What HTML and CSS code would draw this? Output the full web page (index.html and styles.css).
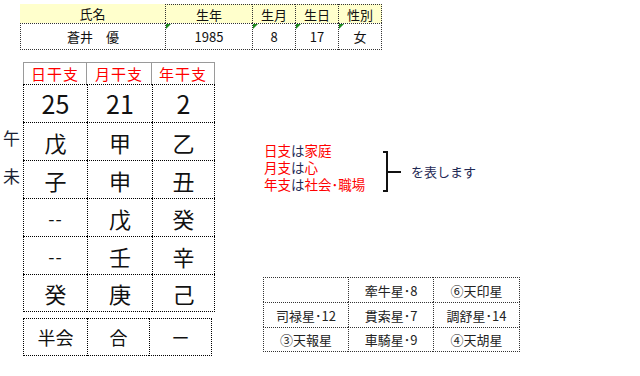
FILE: index.html
```html
<!DOCTYPE html>
<html lang="ja">
<head>
<meta charset="utf-8">
<title>命式</title>
<link rel="stylesheet" href="styles.css">
</head>
<body>
<div class="sheet">
  <div class="profile">
    <div class="ph ph-first">氏名</div>
    <div class="ph">生年</div>
    <div class="ph">生月</div>
    <div class="ph">生日</div>
    <div class="ph ph-last">性別</div>
    <div class="pd">蒼井　優</div>
    <div class="pd flag">1985</div>
    <div class="pd flag">8</div>
    <div class="pd flag">17</div>
    <div class="pd flag pd-last">女</div>
  </div>

  <div class="main">
    <div class="left">
      <div class="kanshi">
        <div class="lbl"></div>
        <div class="kh">日干支</div>
        <div class="kh">月干支</div>
        <div class="kh">年干支</div>

        <div class="lbl"></div>
        <div class="kc num">25</div>
        <div class="kc num">21</div>
        <div class="kc num kc-r">2</div>

        <div class="lbl">午</div>
        <div class="kc">戊</div>
        <div class="kc">甲</div>
        <div class="kc kc-r">乙</div>

        <div class="lbl">未</div>
        <div class="kc">子</div>
        <div class="kc">申</div>
        <div class="kc kc-r">丑</div>

        <div class="lbl"></div>
        <div class="kc dash">--</div>
        <div class="kc">戊</div>
        <div class="kc kc-r">癸</div>

        <div class="lbl"></div>
        <div class="kc dash">--</div>
        <div class="kc">壬</div>
        <div class="kc kc-r">辛</div>

        <div class="lbl"></div>
        <div class="kc kc-b">癸</div>
        <div class="kc kc-b">庚</div>
        <div class="kc kc-r kc-b">己</div>
      </div>

      <div class="relation">
        <div class="rc">半会</div>
        <div class="rc">合</div>
        <div class="rc rc-last">ー</div>
      </div>
    </div>

    <div class="right">
      <div class="note">
        <div class="note-lines">
          <div class="nl"><span class="red">日支</span>は<span class="red">家庭</span></div>
          <div class="nl"><span class="red">月支</span>は<span class="red">心</span></div>
          <div class="nl"><span class="red">年支</span>は<span class="red">社会･職場</span></div>
        </div>
        <svg class="bracket" width="20" height="51" viewBox="0 0 20 51">
          <path d="M1 10 H5 V49 H1 M5 30 H19" fill="none" stroke="#111" stroke-width="2"/>
        </svg>
        <div class="note-tail">を表します</div>
      </div>

      <div class="stars">
        <div class="sc"></div>
        <div class="sc">牽牛星･8</div>
        <div class="sc sc-r">⑥天印星</div>
        <div class="sc">司禄星･12</div>
        <div class="sc">貫索星･7</div>
        <div class="sc sc-r">調舒星･14</div>
        <div class="sc sc-b">③天報星</div>
        <div class="sc sc-b">車騎星･9</div>
        <div class="sc sc-r sc-b">④天胡星</div>
      </div>
    </div>
  </div>
</div>
</body>
</html>
```

FILE: styles.css
```css
* { box-sizing: border-box; }

body {
  margin: 0;
  background: #fff;
  color: #111;
  font-family: "Noto Sans CJK JP", "Noto Sans", sans-serif;
}

.sheet {
  width: 640px;
  height: 376px;
  padding-top: 4px;
}

/* ---------- profile table ---------- */
.profile {
  display: grid;
  grid-template-columns: 145px 87px 43px 43px 44px;
  grid-template-rows: 19px 27px;
  margin-left: 20px;
  width: max-content;
  font-size: 13px;
}

.ph {
  background: #ffffcc;
  display: flex;
  align-items: center;
  justify-content: center;
  border-top: 1px dotted #333;
  border-left: 1px dotted #333;
  line-height: 1;
}

.ph-first {
  border-top: none;
  border-left: none;
}

.ph-last { border-right: 1px dotted #333; }

.pd {
  position: relative;
  display: flex;
  align-items: center;
  justify-content: center;
  border-top: 1px dotted #333;
  border-left: 1px dotted #333;
  border-bottom: 1px dotted #333;
  line-height: 1;
}

.pd-last { border-right: 1px dotted #333; }

.flag::before {
  content: "";
  position: absolute;
  left: 0;
  top: 0;
  border-top: 5px solid #1e8a1e;
  border-right: 5px solid transparent;
}

/* ---------- main area ---------- */
.main {
  display: flex;
  margin-top: 12px;
}

.kanshi {
  display: grid;
  grid-template-columns: 23px 64px 65px 63px;
  grid-template-rows: 22px repeat(6, 38px);
}

.lbl {
  display: flex;
  align-items: center;
  justify-content: center;
  font-size: 17px;
  line-height: 1;
  padding-bottom: 8px;
  color: #1a1f33;
}

.kh {
  display: flex;
  align-items: center;
  justify-content: center;
  color: #ff0000;
  font-size: 15px;
  letter-spacing: 1px;
  border-top: 1px solid #9a9a9a;
  border-left: 1px solid #9a9a9a;
  border-right: 1px solid #9a9a9a;
  line-height: 1;
}

.kh + .kh { border-left: none; }

.kc {
  display: flex;
  align-items: center;
  justify-content: center;
  font-size: 22px;
  line-height: 1;
  border-top: 1px dotted #000;
  border-left: 1px dotted #000;
}

.kc.num { font-size: 25px; }
.kc.dash { font-size: 18px; letter-spacing: 1px; }

.kc-r { border-right: 1px dotted #000; }
.kc-b { border-bottom: 1px dotted #000; }

.relation {
  display: grid;
  grid-template-columns: 64px 62px 63px;
  height: 38px;
  margin: 6px 0 0 23px;
  width: max-content;
}

.rc {
  display: flex;
  align-items: center;
  justify-content: center;
  font-size: 18px;
  line-height: 1;
  border-top: 1px dotted #000;
  border-bottom: 1px dotted #000;
  border-left: 1px dotted #000;
}

.rc-last { border-right: 1px dotted #000; }

/* ---------- right area ---------- */
.right {
  margin-left: 48px;
}

.note {
  display: flex;
  align-items: flex-start;
  margin-top: 80px;
  height: 51px;
  font-size: 13.5px;
  color: #1f2a55;
}

.note-lines {
  width: 119px;
  padding-left: 1px;
}

.nl {
  height: 17px;
  line-height: 17px;
  white-space: nowrap;
}

.red { color: #ff0000; }

.bracket { display: block; }

.note-tail {
  margin-left: 9px;
  padding-top: 21px;
  line-height: 17px;
  font-size: 13px;
}

.stars {
  display: grid;
  grid-template-columns: 85px 85px 87px;
  grid-template-rows: repeat(3, 25px);
  margin-top: 84px;
  width: max-content;
  font-size: 13px;
  color: #222;
}

.sc {
  display: flex;
  align-items: center;
  justify-content: center;
  line-height: 1;
  border-top: 1px dotted #333;
  border-left: 1px dotted #333;
}

.sc-r { border-right: 1px dotted #333; }
.sc-b { border-bottom: 1px dotted #333; }
```
